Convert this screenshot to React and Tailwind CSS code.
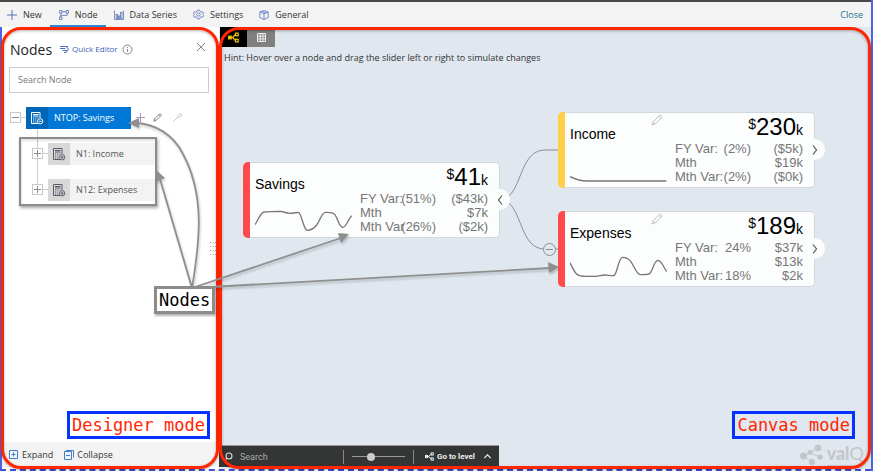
import React from "react";

function Svg({ size = 10, box = 24, children, className = "", sw = 1.6 }) {
  return (
    <svg width={size} height={size} viewBox={`0 0 ${box} ${box}`} fill="none" stroke="currentColor" strokeWidth={sw} className={`shrink-0 ${className}`} aria-hidden="true">
      {children}
    </svg>
  );
}

const PlusIcon = () => <Svg box={10} sw={1} className="text-[#5b73b5]"><path d="M5 0v10M0 5h10" /></Svg>;
const NodeIcon = () => (
  <Svg box={10} sw={0.8} className="text-[#5b73b5]">
    <rect x="0.6" y="0.6" width="2.4" height="2.4" /><rect x="7" y="0.6" width="2.4" height="2.4" /><rect x="0.6" y="7" width="2.4" height="2.4" />
    <path d="M3 1.8h4M1.8 3v4M8.2 3v2.4H1.8" />
  </Svg>
);
const SeriesIcon = () => (
  <Svg box={10} sw={0.8} className="text-[#5b73b5]">
    <path d="M0.5 0.5v9h9v-9" /><rect x="2.2" y="4.5" width="1.4" height="4" /><rect x="4.4" y="6" width="1.4" height="2.5" /><rect x="6.6" y="2.5" width="1.4" height="6" />
  </Svg>
);
const GearIcon = () => (
  <Svg size={11} box={24} sw={1.8} className="text-[#5b73b5]">
    <circle cx="12" cy="12" r="3.6" />
    <path d="M9.5 2.5h5l.8 3 2.6 1.5 3-1 2.4 4-2.2 2 2.2 2-2.4 4-3-1-2.6 1.5-.8 3h-5l-.8-3L6.1 17l-3 1L.8 14 3 12 .8 10l2.3-4 3 1 2.6-1.5z" />
  </Svg>
);
const CubeIcon = () => (
  <Svg box={10} sw={0.8} className="text-[#5b73b5]">
    <path d="M5 .5L9.2 2v5.500L5 9.500.8 7.500V2zM.8 2L5 3.800 9.200 2M5 3.800v5.700M2.800 1.300L7 3" />
  </Svg>
);
const PencilIcon = ({ size = 12, className = "" }) => (
  <Svg size={size} box={12} sw={0.9} className={className}>
    <path d="M1 11l.9-3L8.600 1.300Q9.300.6 10 1.300l.7.7q.7.7 0 1.400L4 10.100zM7.700 2.200l2.100 2.100M1.900 8L4 10.100" />
  </Svg>
);
const CalcIcon = ({ minus }) => (
  <Svg size={14} box={14} sw={1}>
    <path d="M8 12.500H1.500v-11h8.500V7M3 3.500h5.500M3 5h5.500" />
    <path d="M3 7h1.200M5.200 7h1.200M7.400 7h1M3 9h1.200M5.200 9h1.200M3 11h1.200M5.200 11h1.200" strokeWidth="1.200" />
    <circle cx="10.200" cy="10.300" r="2.600" />
    <path d={minus ? "M8.900 10.300h2.600" : "M8.900 10.300h2.600M10.200 9v2.600"} />
  </Svg>
);

function ToolItem({ icon, children, active, first }) {
  return (
    <button type="button" className={`flex h-full items-center gap-1.5 border-b-2 pt-0.5 pr-2 text-[9px] text-[#333] ${first ? "pl-[7px]" : active ? "pl-[9px]" : "pl-2"} ${active ? "border-[#2b88d8]" : "border-transparent"}`}>
      {icon}<span>{children}</span>
    </button>
  );
}

function Toolbar() {
  return (
    <header className="flex h-[27px] shrink-0 items-stretch border-t-2 border-[#4a4548] bg-[#f3f3f3]">
      <nav className="flex flex-1">
        <ToolItem icon={<PlusIcon />} first>New</ToolItem>
        <ToolItem icon={<NodeIcon />} active>Node</ToolItem>
        <ToolItem icon={<SeriesIcon />}>Data Series</ToolItem>
        <ToolItem icon={<GearIcon />}>Settings</ToolItem>
        <ToolItem icon={<CubeIcon />}>General</ToolItem>
      </nav>
      <button type="button" className="mr-2 text-[9px] text-[#266f94]">Close</button>
    </header>
  );
}

function Toggle({ open, label }) {
  return (
    <button type="button" aria-label={label} className="flex size-[11px] shrink-0 items-center justify-center border border-[#c8c8c8] bg-white text-[#8a8a8a]">
      <Svg size={7} box={7} sw={1}><path d={open ? "M0 3.500h7" : "M0 3.500h7M3.500 0v7"} /></Svg>
    </button>
  );
}

function ChildNode({ name }) {
  return (
    <li className="flex h-[22px] items-center">
      <Toggle label={`Expand ${name}`} />
      <span className="h-px w-[5px] bg-[#ccc]" />
      <button type="button" className="flex h-full flex-1 items-center bg-[#f3f3f3] text-left text-[9px] text-[#555]">
        <span className="flex h-full w-[22px] items-center justify-center bg-[#d8d8d8] text-[#5b5a6c]"><CalcIcon /></span>
        <span className="pt-px pl-1.5">{name}</span>
      </button>
    </li>
  );
}

function Frame() {
  return <div className="pointer-events-none absolute inset-0 rounded-[20px] border-3 border-[#ff2600] shadow-[0_1px_2px_rgba(0,0,0,0.3),inset_0_1px_3px_rgba(0,0,0,0.3)]" />;
}

function ModeLabel({ children }) {
  return <p className="border-3 border-[#0433ff] px-0.5 font-['DejaVu_Sans_Mono',monospace] text-[17px] leading-[22px] text-[#ff2600]">{children}</p>;
}

function Sidebar() {
  return (
    <aside className="relative flex w-[219px] shrink-0 flex-col border-l-2 border-[#4a63e8] bg-white">
      <div className="flex h-[38px] items-center pr-3.5 pl-2 pt-1.5">
        <h1 className="text-[14px] text-[#222]">Nodes</h1>
        <button type="button" className="ml-2 flex items-center gap-[3px] text-[8px] text-[#3e62b5]">
          <Svg size={9} box={9} sw={0.9}><path d="M0 1.500h8M0 3.500h5.500M2.500 5.500H7M4 7.500h2M6.500 2l2 2-2.300 3.500" /></Svg>
          Quick Editor
        </button>
        <Svg size={11} box={11} sw={0.8} className="ml-1 text-[#666]"><circle cx="5.500" cy="5.500" r="4.500" /><path d="M5.500 5v3M5.500 3v1" /></Svg>
        <button type="button" aria-label="Close panel" className="mb-1 ml-auto text-[#666]"><Svg size={8} box={8} sw={0.8}><path d="M0 0l8 8M8 0L0 8" /></Svg></button>
      </div>
      <div className="px-[7px]">
        <input aria-label="Search Node" placeholder="Search Node" className="h-[26px] w-[200px] border border-[#ccc] px-2 text-[9px] placeholder:text-[#777]" />
      </div>
      <ul className="mt-3.5 pl-2">
        <li>
          <div className="flex h-[22px] items-center">
            <Toggle open label="Collapse NTOP: Savings" />
            <span className="h-px w-[5px] bg-[#ccc]" />
            <button type="button" className="flex h-full w-[105px] items-center bg-[#0078d7] text-left text-[9px] font-medium text-white">
              <span className="flex h-full w-[22px] items-center justify-center bg-[#0067b8]"><CalcIcon minus /></span>
              <span className="pt-px pl-1.5">NTOP: Savings</span>
            </button>
            <button type="button" aria-label="Add node" className="ml-[5px] text-[#9a7fa8]"><Svg size={9} box={9} sw={0.8}><path d="M4.500 0v9M0 4.500h9" /></Svg></button>
            <button type="button" aria-label="Edit node" className="ml-2 text-[#555]"><PencilIcon size={9} /></button>
            <button type="button" aria-label="Node key" className="ml-[11px] text-[#bbb]"><Svg size={9} box={9} sw={0.9}><path d="M.5 8.500L5 4M4 2.500l2.500 2.500M5 2.500q1.500-2 3.500-1.500.5 2-1.500 3.500" /></Svg></button>
          </div>
          <div className="relative">
            <span className="absolute left-[27px] h-[61px] w-px bg-[#ccc]" />
            <ul className="relative flex w-[146px] flex-col gap-3.5 pl-[22px] pt-3.5">
              <ChildNode name="N1: Income" />
              <ChildNode name="N12: Expenses" />
            </ul>
            <div className="pointer-events-none absolute top-2 left-[9px] h-[69px] w-[138px] border-2 border-[#8c8c8c] shadow-[1px_2px_3px_rgba(0,0,0,0.35),inset_1px_2px_2px_rgba(0,0,0,0.12)]" />
          </div>
        </li>
      </ul>
      <div className="mt-auto mr-[9px] mb-[3px] self-end"><ModeLabel>Designer mode</ModeLabel></div>
      <footer className="mb-0.5 flex h-[25px] items-center gap-[11px] bg-[#f3f3f3] pl-[7px] text-[9px] text-[#333]">
        <button type="button" className="flex items-center gap-1">
          <Svg size={9} box={9} sw={1} className="text-[#3f7fd0]"><path d="M.5.5h8v8h-8zM2.500 4.500h4M4.500 2.500v4" /></Svg>Expand
        </button>
        <button type="button" className="flex items-center gap-[3px]">
          <Svg size={10} box={10} sw={1} className="text-[#3f7fd0]"><path d="M.5 1.500h7v8h-7zM2 5.500h4M2 .5h7.500v7" /></Svg>Collapse
        </button>
      </footer>
      <div className="absolute inset-y-0 right-0 -left-px"><Frame /></div>
      <svg width="6" height="13" viewBox="0 0 6 13" className="absolute top-[215px] right-[3px]" stroke="#a89888" strokeDasharray="1 1.500" aria-hidden="true">
        <path d="M0 .5h6M0 4.500h6M0 8.500h6M0 12.500h6" />
      </svg>
    </aside>
  );
}

const cards = [
  { name: "Savings", value: "41", place: "left-[24px] top-[135px]", strip: "bg-[#ff4b4b]", next: "left", rows: [["FY Var:", "(51%)", "($43k)"], ["Mth", "", "$7k"], ["Mth Var", "(26%)", "($2k)"]],
    box: "73 180 291 90", line: "M73 239C85 220 90 203 100 201C115 199 135 199 150 199C160 200 165 205 178 205S195 202 203 202C213 203 218 256 230 256C240 256 250 250 258 240C270 225 272 202 285 202C295 202 305 201 312 208C322 220 325 247 336 247C346 247 352 224 363 212" },
  { name: "Income", value: "230", place: "left-[339px] top-[85px]", strip: "bg-[#ffcf4a]", next: "right", edit: true, rows: [["FY Var:", "(2%)", "($5k)"], ["Mth", "", "$19k"], ["Mth Var:", "(2%)", "($0k)"]],
    box: "89 180 291 90", line: "M89 245Q115 258 140 258H378" },
  { name: "Expenses", value: "189", place: "left-[339px] top-[184px]", strip: "bg-[#ff4b4b]", next: "right", edit: true, rows: [["FY Var:", "24%", "$37k"], ["Mth", "", "$13k"], ["Mth Var:", "18%", "$2k"]],
    box: "118 162 291 90", line: "M118 188C126 205 132 219 140 224S155 229 165 229H195C205 228 215 225 222 225S240 227 249 227C260 225 263 172 275 172C285 172 294 176 300 184C310 197 318 223 328 224C340 224 350 225 357 221C367 212 370 181 382 181C393 181 400 205 408 215" },
];

function Card({ card }) {
  return (
    <article className={`absolute flex h-[76px] w-[257px] rounded-[5px] border border-[#d3d8de] bg-[#fcfdfd] font-['Liberation_Sans',Arial,sans-serif] ${card.place}`}>
      <span className={`-my-px -ml-px w-[7px] shrink-0 rounded-l-[5px] ${card.strip}`} />
      <div className="w-[105px] shrink-0 pt-[11px] pl-[5px]">
        <h2 className="text-[14px] leading-5 text-black">{card.name}</h2>
        <svg width="97" height="30" viewBox={card.box} className="mt-[11px]" fill="none" stroke="#777" strokeWidth="4" aria-hidden="true"><path d={card.line} /></svg>
      </div>
      <div className="w-[133px] shrink-0 pl-[5px]">
        <p className="flex h-[29px] items-baseline justify-end text-[24px] leading-[28px] text-black">
          <span className="self-start text-[14px] leading-[22px]">$</span>{card.value}<span className="text-[14px]">k</span>
        </p>
        <table className="w-full table-fixed text-[13px] leading-[14px] text-[#777]">
          <tbody>
            {card.rows.map((r) => (
              <tr key={r[0]}>
                <th scope="row" className="w-[43px] p-0 text-left font-normal whitespace-nowrap">{r[0]}</th>
                <td className="w-[33px] p-0"><span className="flex justify-end">{r[1]}</span></td>
                <td className="p-0 text-right">{r[2]}</td>
              </tr>
            ))}
          </tbody>
        </table>
      </div>
      {card.edit && <button type="button" aria-label={`Edit ${card.name}`} className="absolute top-px left-[92px] text-[#bbb]"><PencilIcon /></button>}
      <button type="button" aria-label={`Toggle ${card.name}`} className="absolute top-[26px] -right-[11px] flex size-[21px] items-center justify-center rounded-full bg-[#fcfdfd] text-[#555]">
        <Svg size={10} box={10} sw={1.2}><path d={card.next === "left" ? "M7 .5L3.500 5 7 9.500" : "M3 .5L6.500 5 3 9.500"} /></Svg>
      </button>
    </article>
  );
}

function LevelIcon({ size = 10, className = "" }) {
  return (
    <Svg size={size} box={10} sw={1.1} className={className}>
      <rect x=".5" y="3.800" width="2.400" height="2.400" fill="currentColor" /><rect x="6.800" y="1" width="2.400" height="2.400" /><rect x="6.800" y="6.600" width="2.400" height="2.400" />
      <path d="M3 5h1.300L6.500 2.300M4.300 5l2.200 2.700" />
    </Svg>
  );
}

function Canvas() {
  return (
    <main className="relative flex min-w-0 flex-1 flex-col bg-[#e0e7ef]">
      <div className="flex h-5 pl-px">
        <button type="button" aria-label="Tree view" className="flex w-[27px] items-center justify-center bg-black text-[#f2c811]"><LevelIcon size={11} /></button>
        <button type="button" aria-label="Table view" className="flex w-7 items-center justify-center bg-[#808080] text-[#eee]">
          <Svg size={9} box={9} sw={1}><path d="M.5.5h8v8h-8zM0 3.200h9M0 5.900h9M3.200 0v9M5.900 0v9" /></Svg>
        </button>
      </div>
      <p className="pt-1 pl-[5px] text-[9px] leading-[14px] text-[#333]">Hint: Hover over a node and drag the slider left or right to simulate changes</p>
      <svg className="absolute top-0 left-0" width="360" height="260" viewBox="219 27 360 260" fill="none" stroke="#8b8f94" aria-hidden="true">
        <path d="M509 196C522 184 522 150 545 150H558M509 203C522 215 522 247 543 249M556 249h3" />
        <circle cx="549.500" cy="249.500" r="6" /><path d="M546 249.500h7" />
      </svg>
      {cards.map((c) => <Card key={c.name} card={c} />)}
      <div className="mt-auto flex flex-col">
        <div className="mr-4 mb-[3px] self-end"><ModeLabel>Canvas mode</ModeLabel></div>
        <div className="flex items-end justify-between">
          <div className="mb-0.5 flex h-[22px] w-[280px] items-center border-t border-[#999] bg-[#333635] pl-1 font-[Roboto,'Liberation_Sans',sans-serif] text-[8px] text-[#ddd]">
            <Svg size={10} box={10} sw={1.1}><circle cx="6" cy="4" r="3" /><path d="M4 6.200L.8 9.500" /></Svg>
            <input type="search" aria-label="Search" placeholder="Search" className="ml-[7px] h-3.5 w-[104px] border-r border-[#888] text-[9px] placeholder:text-[#aaa]" />
            <input type="range" aria-label="Zoom" min="0" max="100" defaultValue="33" className="mx-2 h-px w-[53px] appearance-none bg-[#999] [&::-webkit-slider-thumb]:size-2 [&::-webkit-slider-thumb]:appearance-none [&::-webkit-slider-thumb]:rounded-full [&::-webkit-slider-thumb]:bg-[#ccc]" />
            <button type="button" className="flex h-3.5 flex-1 items-center border-l border-[#888] pl-[11px] font-bold text-[#eee]">
              <LevelIcon size={9} /><span className="ml-[3px] whitespace-nowrap">Go to level</span>
              <Svg size={7} box={7} sw={1.1} className="ml-[9px]"><path d="M.3 5l3.200-3.200L6.700 5" /></Svg>
            </button>
          </div>
          <div className="mr-[7px] mb-0.5 flex h-[25px] items-center gap-1 text-[#c3c5c8]">
            <svg width="23" height="22" viewBox="0 0 23 22" fill="currentColor" stroke="currentColor" aria-hidden="true">
              <path d="M3 12L10 9L18 4M10 9L20 13M3 12L12 18" /><circle cx="3.500" cy="12" r="3" /><circle cx="10" cy="8.500" r="2" /><circle cx="18" cy="4" r="3" /><circle cx="20" cy="13" r="2.300" /><circle cx="12" cy="18" r="2.800" />
            </svg>
            <div className="font-[Lato,sans-serif]">
              <p className="text-[18px] leading-[22px] font-bold">val<span className="font-normal">Q</span></p>
              <p className="text-[2px] leading-[3px] whitespace-nowrap text-[#999]">AGILE PLANNING &amp; SIMULATION</p>
            </div>
          </div>
        </div>
      </div>
      <div className="absolute inset-y-0 right-0 left-0"><Frame /></div>
    </main>
  );
}

function Annotations() {
  return (
    <div className="pointer-events-none absolute top-0 left-0">
      <svg className="drop-shadow-[1px_2px_1px_rgba(0,0,0,0.2)]" width="600" height="320" viewBox="0 0 600 320" fill="none" stroke="#8f8f8f" strokeWidth="1.800" aria-hidden="true">
        <path d="M192 288C200 240 205 195 183 154C173 134 155 124 136 123M192 288L160 179M192 288L341 238M192 288L550 268" />
        <g fill="#8f8f8f" stroke="none"><path d="M128 123l11-5v10zM155 169l10 9-9 4zM349 234l-8 9-3-10zM559 267l-10 6-1-11z" /></g>
      </svg>
      <p className="absolute top-[286px] left-[154px] border-3 border-[#8c8c8c] bg-white px-0.5 font-['DejaVu_Sans_Mono',monospace] text-[17px] leading-[22px] text-black shadow-[1px_2px_2px_rgba(0,0,0,0.3)]">Nodes</p>
    </div>
  );
}

export default function App() {
  return (
    <div className="relative flex min-h-screen flex-col border-r-2 border-[#4a63e8] bg-white font-['Open_Sans','Noto_Sans',sans-serif]">
      <Toolbar />
      <div className="flex flex-1"><Sidebar /><Canvas /></div>
      <div className="h-0.5 border-t-2 border-dashed border-[#3f4fd8]" />
      <Annotations />
    </div>
  );
}
